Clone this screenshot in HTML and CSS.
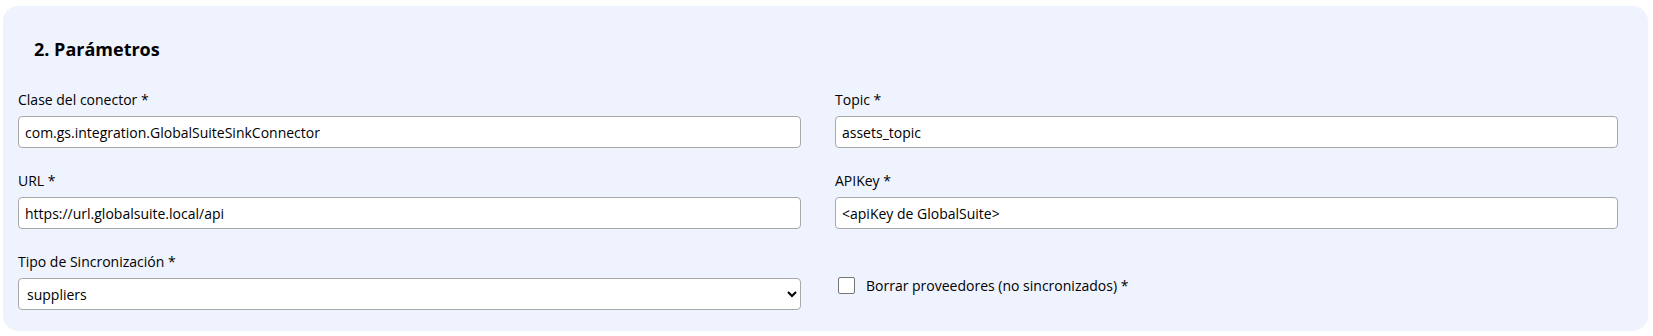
FILE: index.html
```html
<!DOCTYPE html>
<html lang="es">
<head>
    <meta charset="UTF-8">
    <meta name="viewport" content="width=device-width, initial-scale=1.0">
    <title>Parámetros del conector</title>
    <link rel="stylesheet" href="styles.css">
</head>
<body>
    <div id="paramsCard" class="paramsCard">
        <h2 class="paramsTitle">2. Parámetros</h2>
        <div class="paramsGrid">
            <div class="field">
                <label class="fieldLabel" for="connClass">Clase del conector *</label>
                <input id="connClass" class="fieldInput" type="text" value="com.gs.integration.GlobalSuiteSinkConnector">
            </div>
            <div class="field">
                <label class="fieldLabel" for="topic">Topic *</label>
                <input id="topic" class="fieldInput" type="text" value="assets_topic">
            </div>
            <div class="field">
                <label class="fieldLabel" for="url">URL *</label>
                <input id="url" class="fieldInput" type="text" value="https://url.globalsuite.local/api">
            </div>
            <div class="field">
                <label class="fieldLabel" for="apiKey">APIKey *</label>
                <input id="apiKey" class="fieldInput" type="text" value="<apiKey de GlobalSuite>">
            </div>
            <div class="field">
                <label class="fieldLabel" for="syncType">Tipo de Sincronización *</label>
                <select id="syncType" class="fieldInput fieldSelect">
                    <option>suppliers</option>
                    <option>assets</option>
                </select>
            </div>
            <div class="field fieldCheck">
                <input id="deleteSuppliers" class="checkBox" type="checkbox">
                <label class="checkLabel" for="deleteSuppliers">Borrar proveedores (no sincronizados) *</label>
            </div>
        </div>
    </div>
</body>
</html>
```

FILE: styles.css
```css
html, body {
    font-family: "Open Sans", "Noto Sans", sans-serif;
    margin: 0;
    padding: 0;
    color: #000;
    background: #fff;
}
body {
    padding: 6px 5px 0 3px;
}
div.paramsCard {
    background-color: #eef3fe;
    border-radius: 15px;
    padding: 28px 30px 21px 15px;
}
h2.paramsTitle {
    margin: 0 0 0 16px;
    font-size: 18px;
    font-weight: 700;
    line-height: 30px;
}
div.paramsGrid {
    display: grid;
    grid-template-columns: 1fr 1fr;
    column-gap: 34px;
    row-gap: 23px;
    margin-top: 26px;
}
div.field {
    display: flex;
    flex-direction: column;
}
label.fieldLabel {
    font-size: 14px;
    line-height: 20px;
    margin-bottom: 6px;
}
.fieldInput {
    box-sizing: border-box;
    height: 32px;
    border: 1px solid #a8a8a8;
    border-radius: 4px;
    background: #fff;
    font-family: inherit;
    font-size: 14px;
    color: #000;
    padding: 0 6px;
    outline: none;
}
select.fieldSelect {
    padding: 0 4px;
}
div.fieldCheck {
    flex-direction: row;
    align-items: center;
    align-self: end;
    height: 32px;
    margin-bottom: 9px;
    padding-left: 3px;
}
input.checkBox {
    appearance: none;
    box-sizing: border-box;
    width: 17px;
    height: 17px;
    margin: 0 11px 0 0;
    border: 1px solid #767676;
    border-radius: 2px;
    background: #fff;
}
label.checkLabel {
    font-size: 14px;
}
```
